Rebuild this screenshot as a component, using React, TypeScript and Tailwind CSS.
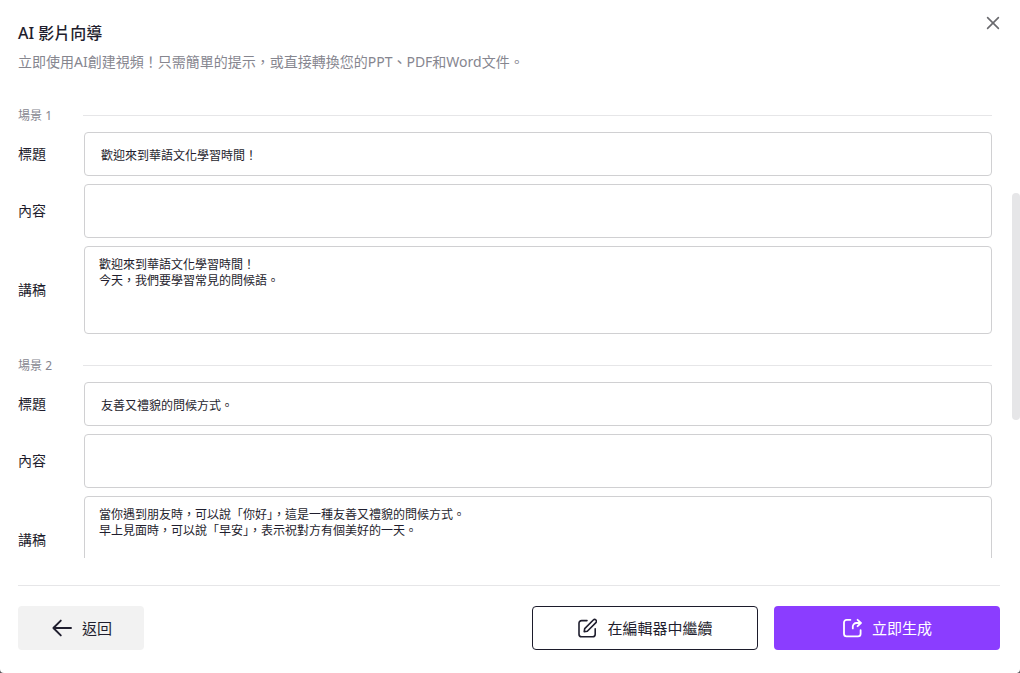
import { useId } from "react"

const scenes = [
  {
    title: "歡迎來到華語文化學習時間！",
    content: "",
    script: "歡迎來到華語文化學習時間！\n今天，我們要學習常見的問候語。",
  },
  {
    title: "友善又禮貌的問候方式。",
    content: "",
    script:
      "當你遇到朋友時，可以說「你好」，這是一種友善又禮貌的問候方式。\n早上見面時，可以說「早安」，表示祝對方有個美好的一天。",
  },
]

const CloseIcon = () => (
  <svg width="14" height="14" viewBox="0 0 14 14" fill="none" stroke="currentColor" strokeWidth="1.6" strokeLinecap="round">
    <path d="M1.6 1.6l10.8 10.8M12.4 1.6L1.6 12.4" />
  </svg>
)

const BackIcon = () => (
  <svg width="20" height="18" viewBox="0 0 20 18" fill="none" stroke="currentColor" strokeWidth="1.9" strokeLinecap="round" strokeLinejoin="round">
    <path d="M19 9H1.4M8.8 1.6L1.4 9l7.4 7.4" />
  </svg>
)

const EditIcon = () => (
  <svg width="20" height="20" viewBox="0 0 20 20" fill="none" stroke="currentColor" strokeWidth="1.6" strokeLinecap="round" strokeLinejoin="round">
    <path d="M10 2.6H4.6A2.6 2.6 0 0 0 2 5.2v11a2.6 2.6 0 0 0 2.6 2.6h11a2.6 2.6 0 0 0 2.6-2.6v-5.4" />
    <path d="M7.2 13.7l.5-3.1 8.6-8.6a1.8 1.8 0 0 1 2.6 2.6l-8.6 8.6-3.1.5z" />
  </svg>
)

const ShareIcon = () => (
  <svg width="20" height="20" viewBox="0 0 20 20" fill="none" stroke="currentColor" strokeWidth="1.8" strokeLinecap="round" strokeLinejoin="round">
    <path d="M8.4 1.8H4.6A2.6 2.6 0 0 0 2 4.4v11.4a2.6 2.6 0 0 0 2.6 2.6H16a2.6 2.6 0 0 0 2.6-2.6v-3.6" />
    <path d="M10.8 10.4V8.6a3.6 3.6 0 0 1 3.6-3.6h4" />
    <path d="M15.6 1.8L18.9 5l-3.3 3.2" />
  </svg>
)

function Scene({ index, scene }: { index: number; scene: (typeof scenes)[number] }) {
  const id = useId()

  return (
    <section className="mb-6 flex flex-col gap-2">
      <div className="flex h-4 items-center">
        <h2 className="w-[65px] shrink-0 text-xs text-[#86868f]">場景 {index}</h2>
        <hr className="mb-px flex-1 border-[#e6e6e8]" />
      </div>
      <div className="flex items-center">
        <label htmlFor={`${id}-title`} className="w-[66px] shrink-0 text-sm">
          標題
        </label>
        <input
          id={`${id}-title`}
          type="text"
          defaultValue={scene.title}
          className="h-11 min-w-0 flex-1 rounded border border-[#d0d0d2] px-4 pt-0.5 text-xs outline-none focus:border-[#8b3dff]"
        />
      </div>
      <div className="flex items-center">
        <label htmlFor={`${id}-content`} className="w-[66px] shrink-0 text-sm">
          內容
        </label>
        <textarea
          id={`${id}-content`}
          defaultValue={scene.content}
          className="h-[54px] min-w-0 flex-1 resize-none rounded border border-[#d0d0d2] px-3.5 py-2.5 text-xs outline-none focus:border-[#8b3dff]"
        />
      </div>
      <div className="flex items-center">
        <label htmlFor={`${id}-script`} className="w-[66px] shrink-0 text-sm">
          講稿
        </label>
        <textarea
          id={`${id}-script`}
          defaultValue={scene.script}
          className="h-[88px] min-w-0 flex-1 resize-none rounded border border-[#d0d0d2] px-3.5 py-2.5 text-xs outline-none focus:border-[#8b3dff]"
        />
      </div>
    </section>
  )
}

export default function App() {
  return (
    <div className="h-screen bg-[#55555a] font-['Noto_Sans','Noto_Sans_CJK_TC',sans-serif] text-[#1f1e2e]">
      <div className="relative flex h-full flex-col rounded-b bg-white pl-[18px]">
        <header className="flex shrink-0 items-start justify-between pt-4 pr-5">
          <div className="pt-[5px]">
            <h1 className="text-base font-medium">AI 影片向導</h1>
            <p className="mt-[7px] text-sm text-[#86868f]">
              立即使用AI創建視頻！只需簡單的提示，或直接轉換您的PPT、PDF和Word文件。
            </p>
          </div>
          <button type="button" aria-label="關閉" className="text-[#6a6a6e]">
            <CloseIcon />
          </button>
        </header>

        <main className="mt-9 min-h-0 flex-1 overflow-hidden pr-7">
          {scenes.map((scene, i) => (
            <Scene key={i} index={i + 1} scene={scene} />
          ))}
        </main>
        <div className="absolute top-[193px] right-0 h-[227px] w-2 rounded-full bg-[#e6e6e8]" />

        <footer className="mt-[27px] mr-5 flex shrink-0 items-center gap-4 border-t border-[#e6e6e8] pt-5 pb-[23px] text-[15px]">
          <button type="button" className="mr-auto flex h-11 w-[126px] items-center justify-center gap-2.5 rounded bg-[#f2f2f2] pl-0.5">
            <BackIcon />
            返回
          </button>
          <button type="button" className="flex h-11 w-[226px] items-center justify-center gap-2.5 rounded border border-[#1c1b2b] bg-white">
            <EditIcon />
            在編輯器中繼續
          </button>
          <button type="button" className="flex h-11 w-[226px] items-center justify-center gap-2.5 rounded bg-[#8b3dff] text-white">
            <ShareIcon />
            立即生成
          </button>
        </footer>
      </div>
    </div>
  )
}
